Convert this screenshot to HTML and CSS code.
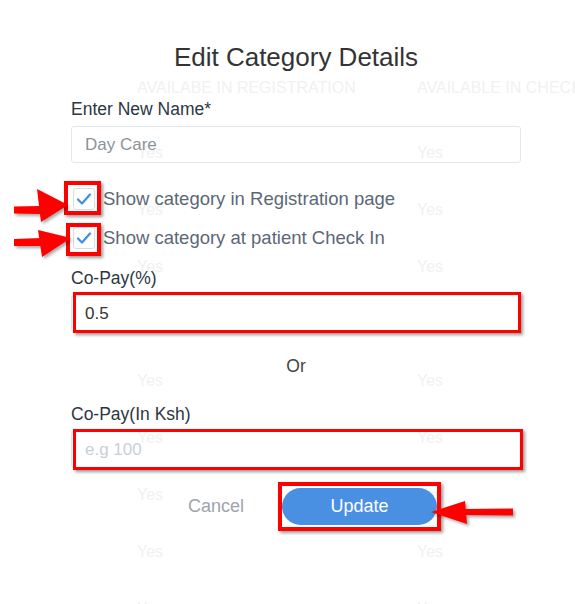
FILE: index.html
```html
<!DOCTYPE html>
<html lang="en">
<head>
<meta charset="utf-8">
<title>Edit Category Details</title>
<link rel="stylesheet" href="styles.css">
</head>
<body>
<div class="page">
  <div class="bg-table" aria-hidden="true">
    <div class="bg-row bg-head"><span>AVAILABE IN REGISTRATION</span><span>AVAILABLE IN CHECK IN</span></div>
    <div class="bg-row"><span>Yes</span><span>Yes</span></div>
    <div class="bg-row"><span>Yes</span><span>Yes</span></div>
    <div class="bg-row"><span>Yes</span><span>Yes</span></div>
    <div class="bg-row"><span>Yes</span><span>Yes</span></div>
    <div class="bg-row"><span>Yes</span><span>Yes</span></div>
    <div class="bg-row"><span>Yes</span><span>Yes</span></div>
    <div class="bg-row"><span>Yes</span><span>Yes</span></div>
    <div class="bg-row"><span>Yes</span><span>Yes</span></div>
    <div class="bg-row"><span>Yes</span><span>Yes</span></div>
  </div>

  <div class="modal">
    <h2 class="title">Edit Category Details</h2>

    <label class="label label-name">Enter New Name*</label>
    <input class="input input-muted" type="text" value="Day Care">

    <div class="checks">
      <div class="check-row">
        <span class="checkbox hl hl-cb1">
          <svg viewBox="0 0 22 22" width="22" height="22"><polyline points="5,11.5 9,15.5 17,6.5" fill="none" stroke="#3b8fe4" stroke-width="2.2" stroke-linecap="round" stroke-linejoin="round"/></svg>
        </span>
        <span>Show category in Registration page</span>
      </div>
      <div class="check-row">
        <span class="checkbox hl hl-cb2">
          <svg viewBox="0 0 22 22" width="22" height="22"><polyline points="5,11.5 9,15.5 17,6.5" fill="none" stroke="#3b8fe4" stroke-width="2.2" stroke-linecap="round" stroke-linejoin="round"/></svg>
        </span>
        <span>Show category at patient Check In</span>
      </div>
    </div>

    <label class="label label-pct">Co-Pay(%)</label>
    <div class="hl hl-pct field">
      <input class="input input-solid" type="text" value="0.5">
    </div>

    <div class="or">Or</div>

    <label class="label label-ksh">Co-Pay(In Ksh)</label>
    <div class="hl hl-ksh field">
      <input class="input" type="text" placeholder="e.g 100">
    </div>

    <div class="actions">
      <button class="btn-cancel" type="button">Cancel</button>
      <span class="hl hl-update"><button class="btn-update" type="button">Update</button></span>
    </div>
  </div>

  <svg class="arrows" viewBox="0 0 575 604" width="575" height="604" aria-hidden="true">
    <g class="arrow-shapes" fill="#ff0000">
      <polygon points="14,206.5 40,206 40,214 14,213.5"/>
      <polygon points="37,189 68,205 41,222"/>
      <polygon points="14,239 42,238 42,246 14,246"/>
      <polygon points="38,230 71,238 42,257"/>
      <polygon points="464,509 513,508.5 513,515.5 464,515"/>
      <polygon points="431,512 465,501 467,524"/>
    </g>
  </svg>
</div>
</body>
</html>
```

FILE: styles.css
```css
* { box-sizing: border-box; }

html, body {
  margin: 0;
  padding: 0;
  background: #ffffff;
}

body {
  font-family: "Liberation Sans", Arial, sans-serif;
  width: 575px;
  height: 604px;
  overflow: hidden;
}

.page {
  position: relative;
  width: 575px;
  height: 604px;
  overflow: hidden;
}

/* faint table behind the dialog */
.bg-table {
  position: absolute;
  left: 137px;
  top: 73px;
  z-index: 0;
  color: #f1f1f1;
  white-space: nowrap;
}

.bg-row {
  display: grid;
  grid-template-columns: 280px 280px;
  height: 57px;
  line-height: 57px;
  font-size: 16px;
}

.bg-head {
  height: 30px;
  line-height: 30px;
  font-size: 16px;
  margin-bottom: 21px;
}

/* dialog */
.modal {
  position: relative;
  z-index: 1;
  width: 450px;
  margin-left: 71px;
  padding-top: 42px;
  display: flex;
  flex-direction: column;
}

.title {
  margin: 0;
  font-size: 26px;
  line-height: 30px;
  font-weight: normal;
  text-align: center;
  color: #333333;
}

.label {
  display: block;
  font-size: 17.5px;
  line-height: 20px;
  color: #2d3742;
}

.label-name { margin-top: 27px; }
.label-pct { margin-top: 18px; }
.label-ksh { margin-top: 28px; }

.input {
  display: block;
  width: 100%;
  height: 37px;
  margin-top: 7px;
  padding: 0 13px;
  border: 1px solid #e4e7ea;
  border-radius: 3px;
  background: transparent;
  font-family: inherit;
  font-size: 17px;
  color: #333333;
  outline: none;
}

.field .input { margin-top: 0; }
.field { margin-top: 7px; }

.input-muted { color: #8d9399; }
.input-solid { background: #ffffff; }

.input::placeholder { color: #c8cfd8; }

.checks {
  margin-top: 24px;
  display: flex;
  flex-direction: column;
  gap: 15px;
}

.check-row {
  display: flex;
  align-items: center;
  gap: 8px;
  height: 24px;
  line-height: 24px;
  font-size: 18.5px;
  color: #5c6776;
}

.checkbox {
  width: 22px;
  height: 22px;
  margin-left: 2px;
  border: 1px solid #d9dde2;
  border-radius: 3px;
  background: #ffffff;
  flex: none;
}

.checkbox svg {
  display: block;
  margin: -1px;
}

.or {
  margin-top: 24px;
  text-align: center;
  font-size: 17.5px;
  line-height: 20px;
  color: #444444;
}

.actions {
  margin-top: 20px;
  padding-left: 3px;
  display: flex;
  justify-content: center;
  align-items: center;
  gap: 8px;
}

.btn-cancel {
  height: 37px;
  padding: 0 30px;
  border: none;
  background: none;
  font-family: inherit;
  font-size: 18px;
  color: #9ea4ad;
}

.btn-update {
  display: block;
  width: 155px;
  height: 37px;
  border: none;
  border-radius: 19px;
  background: #4a90e2;
  color: #ffffff;
  font-family: inherit;
  font-size: 18px;
}

/* red annotation boxes */
.hl { position: relative; display: block; }
.hl::after {
  content: "";
  position: absolute;
  border: 4px solid #ff0000;
  box-shadow: 2px 2px 3px rgba(0, 0, 0, 0.4);
  pointer-events: none;
}

.hl-cb1::after { top: -8px; bottom: -6px; left: -10px; right: -7px; }
.hl-cb2::after { top: -5px; bottom: -8px; left: -8px; right: -7px; }
.hl-pct::after { top: -3px; bottom: -1px; left: 2px; right: 0; border-width: 3.5px; }
.hl-ksh::after { top: -2px; bottom: -2px; left: 2px; right: -2px; border-width: 3.5px; }
.hl-update::after { top: -6px; bottom: -6px; left: -4px; right: -4px; }

/* annotation arrows */
.arrows {
  position: absolute;
  left: 0;
  top: 0;
  z-index: 2;
  pointer-events: none;
}

.arrow-shapes {
  filter: drop-shadow(2px 2px 1.5px rgba(0, 0, 0, 0.35));
}
```
